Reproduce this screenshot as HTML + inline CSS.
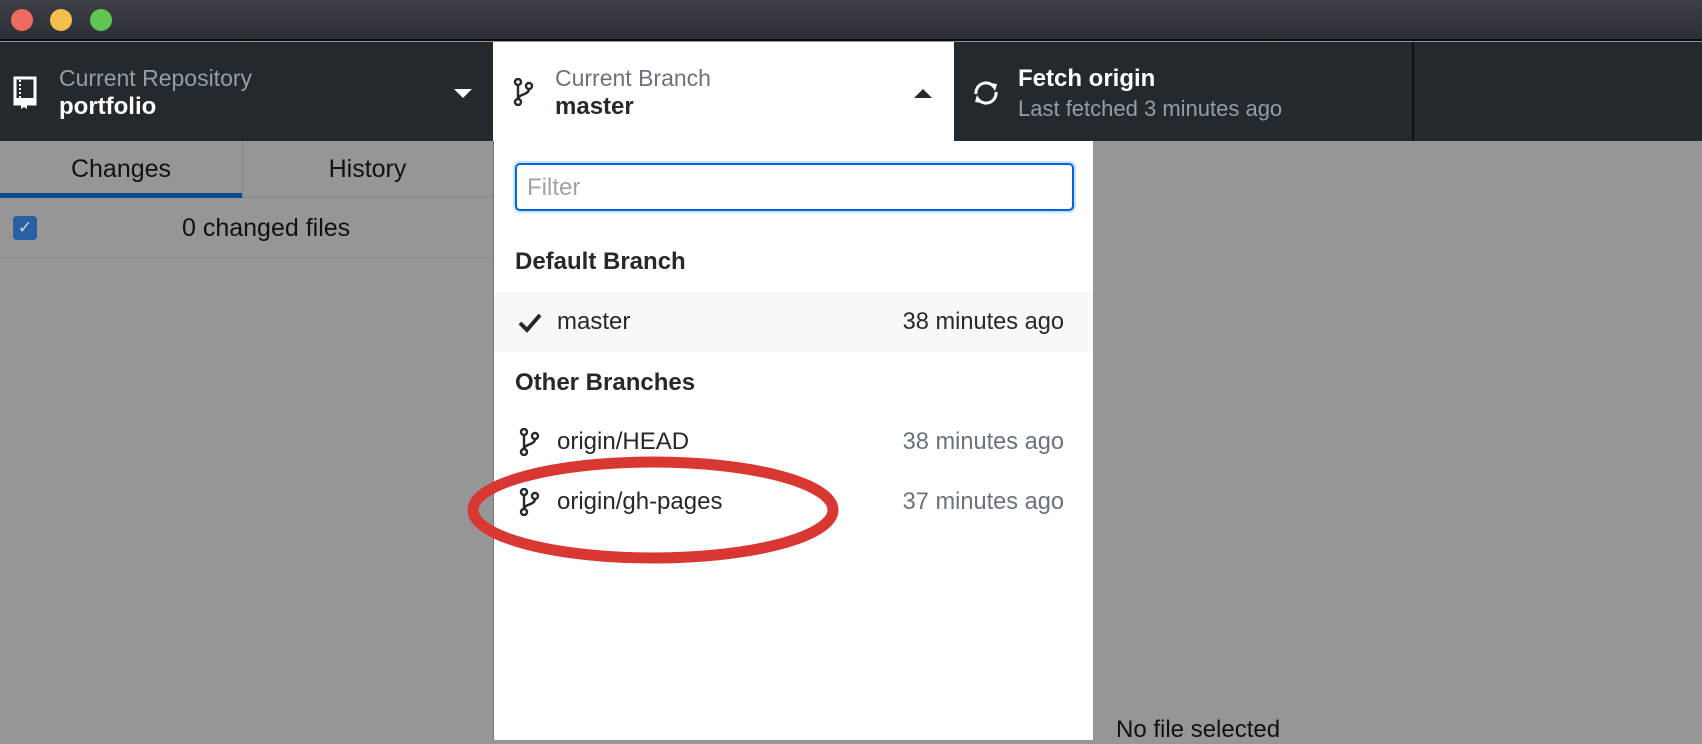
<!DOCTYPE html>
<html><head><style>
*{margin:0;padding:0;box-sizing:border-box}
body{width:1702px;height:740px;overflow:hidden;background:#969696;font-family:"Liberation Sans",sans-serif;position:relative}
.a{position:absolute}
.t{white-space:nowrap}
</style></head><body>
<div class="a" style="left:0;top:0;width:1702px;height:41px;background:linear-gradient(#3c3f45,#2d3036);border-bottom:2px solid #0b0c0d"></div>
<div class="a" style="left:11px;top:9px;width:22px;height:22px;border-radius:50%;background:#ee6a5f"></div>
<div class="a" style="left:50px;top:9px;width:22px;height:22px;border-radius:50%;background:#f5be4f"></div>
<div class="a" style="left:90px;top:9px;width:22px;height:22px;border-radius:50%;background:#61c454"></div>
<div class="a" style="left:0;top:42px;width:1702px;height:99px;background:#24292e"></div>
<div class="a" style="left:1412px;top:42px;width:2px;height:99px;background:#111"></div>
<!-- repo -->
<svg class="a" style="left:13px;top:76px" width="24" height="34" viewBox="0 0 24 34"><rect x="2" y="2" width="20" height="26" fill="none" stroke="#fff" stroke-width="3"/><line x1="7" y1="4" x2="7" y2="22" stroke="#fff" stroke-width="2" stroke-dasharray="2 2"/><rect x="2" y="22" width="20" height="6" fill="#fff"/><path d="M8 26v7l3-2 3 2v-7z" fill="#fff"/></svg>
<div class="a t" style="left:59px;top:65px;font-size:23px;color:#959da5">Current Repository</div>
<div class="a t" style="left:59px;top:93px;font-size:24px;color:#fff;font-weight:bold">portfolio</div>
<div class="a" style="left:454px;top:89px;border-left:9px solid transparent;border-right:9px solid transparent;border-top:9px solid #fff"></div>
<!-- dropdown panel -->
<div class="a" style="left:493px;top:42px;width:461px;height:99px;background:#fff"></div>
<div class="a" style="left:493px;top:141px;width:600px;height:599px;background:#fff;border-left:1px solid #777"></div>
<svg class="a" style="left:513px;top:78px" width="22" height="28" viewBox="0 0 22 28"><g fill="none" stroke="#24292e" stroke-width="2.4"><circle cx="5" cy="4" r="3"/><circle cx="16" cy="8" r="3"/><circle cx="5" cy="24" r="3"/><path d="M5 7v14M16 11c0 6-11 5-11 10"/></g></svg>
<div class="a t" style="left:555px;top:65px;font-size:23px;color:#6a737d">Current Branch</div>
<div class="a t" style="left:555px;top:93px;font-size:24px;color:#24292e;font-weight:bold">master</div>
<div class="a" style="left:914px;top:89px;border-left:9px solid transparent;border-right:9px solid transparent;border-bottom:9px solid #24292e"></div>
<!-- fetch -->
<svg class="a" style="left:972px;top:79px" width="28" height="28" viewBox="0 0 28 28"><g fill="none" stroke="#fff" stroke-width="3"><path d="M4 15A10 10 0 0 1 22 8"/><path d="M24 13A10 10 0 0 1 6 20"/></g><path d="M18 4l7 1-2 7z M10 24l-7-1 2-7z" fill="#fff"/></svg>
<div class="a t" style="left:1018px;top:65px;font-size:24px;color:#fff;font-weight:bold">Fetch origin</div>
<div class="a t" style="left:1018px;top:96px;font-size:22px;color:#959da5">Last fetched 3 minutes ago</div>
<!-- left panel -->
<div class="a" style="left:0;top:141px;width:493px;height:57px;border-bottom:1px solid #878787"></div>
<div class="a" style="left:242px;top:141px;width:1px;height:57px;background:#888"></div>
<div class="a" style="left:0;top:193px;width:242px;height:5px;background:#0b4a8f"></div>
<div class="a t" style="left:0;top:155px;width:242px;text-align:center;font-size:25px;color:#111">Changes</div>
<div class="a t" style="left:242px;top:155px;width:251px;text-align:center;font-size:25px;color:#111">History</div>
<div class="a" style="left:0;top:257px;width:493px;height:1px;background:#878787"></div>
<div class="a" style="left:13px;top:216px;width:24px;height:24px;border-radius:4px;background:#2a5fa3;color:#cfd9e8;font-size:17px;text-align:center;line-height:24px">✓</div>
<div class="a t" style="left:182px;top:214px;font-size:25px;color:#111">0 changed files</div>
<!-- list -->
<div class="a" style="left:515px;top:163px;width:559px;height:48px;border:2px solid #0366d6;border-radius:5px;box-shadow:0 0 0 2px #c8e1ff"></div>
<div class="a t" style="left:527px;top:174px;font-size:24px;color:#a0a4a8">Filter</div>
<div class="a t" style="left:515px;top:248px;font-size:24px;color:#24292e;font-weight:bold">Default Branch</div>
<div class="a" style="left:494px;top:292px;width:599px;height:60px;background:#f6f8fa"></div>
<svg class="a" style="left:517px;top:312px" width="26" height="22" viewBox="0 0 26 22"><path d="M3 11l7 7L23 3" fill="none" stroke="#24292e" stroke-width="4"/></svg>
<div class="a t" style="left:557px;top:308px;font-size:24px;color:#24292e">master</div>
<div class="a t" style="left:800px;top:309px;width:264px;text-align:right;font-size:23.6px;color:#24292e">38 minutes ago</div>
<div class="a t" style="left:515px;top:369px;font-size:24px;color:#24292e;font-weight:bold">Other Branches</div>
<svg class="a" style="left:519px;top:428px" width="22" height="28" viewBox="0 0 22 28"><g fill="none" stroke="#24292e" stroke-width="2.4"><circle cx="5" cy="4" r="3"/><circle cx="16" cy="8" r="3"/><circle cx="5" cy="24" r="3"/><path d="M5 7v14M16 11c0 6-11 5-11 10"/></g></svg>
<div class="a t" style="left:557px;top:428px;font-size:24px;color:#24292e">origin/HEAD</div>
<div class="a t" style="left:800px;top:429px;width:264px;text-align:right;font-size:23.6px;color:#6a737d">38 minutes ago</div>
<svg class="a" style="left:519px;top:488px" width="22" height="28" viewBox="0 0 22 28"><g fill="none" stroke="#24292e" stroke-width="2.4"><circle cx="5" cy="4" r="3"/><circle cx="16" cy="8" r="3"/><circle cx="5" cy="24" r="3"/><path d="M5 7v14M16 11c0 6-11 5-11 10"/></g></svg>
<div class="a t" style="left:557px;top:488px;font-size:24px;color:#24292e">origin/gh-pages</div>
<div class="a t" style="left:800px;top:489px;width:264px;text-align:right;font-size:23.6px;color:#6a737d">37 minutes ago</div>
<svg class="a" style="left:460px;top:452px" width="386" height="116" viewBox="0 0 386 116"><ellipse cx="193" cy="58" rx="180" ry="48" fill="none" stroke="#d93732" stroke-width="11"/></svg>
<div class="a t" style="left:1116px;top:716px;font-size:24px;color:#111">No file selected</div>
</body></html>
